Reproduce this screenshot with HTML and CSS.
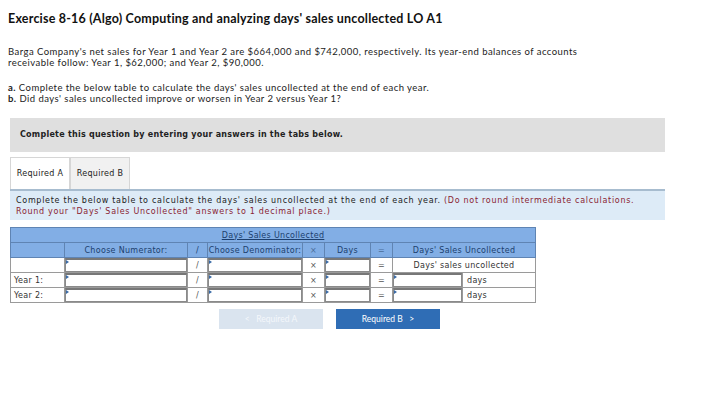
FILE: index.html
```html
<!DOCTYPE html>
<html lang="en">
<head>
    <meta charset="UTF-8">
    <title>Exercise 8-16 (Algo)</title>
    <link rel="stylesheet" href="styles.css">
</head>
<body>
    <h1>Exercise 8-16 (Algo) Computing and analyzing days' sales uncollected LO A1</h1>

    <p class="intro">Barga Company's net sales for Year 1 and Year 2 are $664,000 and $742,000, respectively. Its year-end balances of accounts receivable follow: Year 1, $62,000; and Year 2, $90,000.</p>

    <p class="parts"><b>a.</b> Complete the below table to calculate the days' sales uncollected at the end of each year.<br>
    <b>b.</b> Did days' sales uncollected improve or worsen in Year 2 versus Year 1?</p>

    <div class="notice">Complete this question by entering your answers in the tabs below.</div>

    <div class="tabs">
        <div class="tab active">Required A</div>
        <div class="tab">Required B</div>
    </div>

    <div class="instructions">
        Complete the below table to calculate the days' sales uncollected at the end of each year. <span class="warn">(Do not round intermediate calculations.</span><br>
        <span class="warn">Round your "Days' Sales Uncollected" answers to 1 decimal place.)</span>
    </div>

    <table class="calc">
        <colgroup>
            <col class="c-label">
            <col class="c-num">
            <col class="c-op">
            <col class="c-den">
            <col class="c-op2">
            <col class="c-days">
            <col class="c-op2">
            <col class="c-res">
            <col class="c-unit">
        </colgroup>
        <tr class="head-top">
            <th colspan="9"><u>Days' Sales Uncollected</u></th>
        </tr>
        <tr class="head">
            <th></th>
            <th>Choose Numerator:</th>
            <th>/</th>
            <th>Choose Denominator:</th>
            <th class="op-head">&times;</th>
            <th>Days</th>
            <th class="op-head">=</th>
            <th colspan="2">Days' Sales Uncollected</th>
        </tr>
        <tr>
            <td></td>
            <td class="in"><div class="box"></div></td>
            <td class="op">/</td>
            <td class="in"><div class="box"></div></td>
            <td class="op">&times;</td>
            <td class="in"><div class="box"></div></td>
            <td class="op">=</td>
            <td colspan="2" class="result-label">Days' sales uncollected</td>
        </tr>
        <tr>
            <td class="year">Year 1:</td>
            <td class="in"><div class="box"></div></td>
            <td class="op">/</td>
            <td class="in"><div class="box"></div></td>
            <td class="op">&times;</td>
            <td class="in"><div class="box"></div></td>
            <td class="op">=</td>
            <td class="in"><div class="box"></div></td>
            <td class="unit">days</td>
        </tr>
        <tr>
            <td class="year">Year 2:</td>
            <td class="in"><div class="box"></div></td>
            <td class="op">/</td>
            <td class="in"><div class="box"></div></td>
            <td class="op">&times;</td>
            <td class="in"><div class="box"></div></td>
            <td class="op">=</td>
            <td class="in"><div class="box"></div></td>
            <td class="unit">days</td>
        </tr>
    </table>

    <div class="nav">
        <button class="nav-btn disabled">&lt;&nbsp;&nbsp;&nbsp;Required A</button>
        <button class="nav-btn primary">Required B&nbsp;&nbsp;&nbsp;&gt;</button>
    </div>
</body>
</html>
```

FILE: styles.css
```css
body {
    margin: 0;
    padding: 0 8px;
    font-family: Lato, 'Liberation Sans', sans-serif;
    color: #222;
    background: white;
}

h1 {
    font-size: 12.5px;
    font-weight: 700;
    letter-spacing: 0.2px;
    margin: 11px 0 0;
    line-height: 16px;
    color: #111;
}

.intro {
    font-size: 9.5px;
    letter-spacing: 0.45px;
    line-height: 11px;
    margin: 19px 0 0;
    max-width: 570px;
}

.parts {
    font-size: 9.5px;
    letter-spacing: 0.45px;
    line-height: 11px;
    margin: 14px 0 0;
}

.notice {
    margin: 14px 0 0 2px;
    width: 655px;
    background: #dfdfdf;
    font-family: 'DejaVu Sans', Verdana, sans-serif;
    font-weight: bold;
    font-size: 8px;
    letter-spacing: 0.25px;
    padding: 8px 10px;
    box-sizing: border-box;
    height: 34px;
    line-height: 18px;
}

.tabs {
    display: flex;
    margin: 5px 0 0 2px;
}

.tab {
    font-family: 'DejaVu Sans', Verdana, sans-serif;
    font-size: 8px;
    letter-spacing: 0.3px;
    width: 60px;
    height: 32px;
    line-height: 32px;
    text-align: center;
    box-sizing: border-box;
    border: 1px solid #d6d6d6;
    border-bottom: none;
    background: #f1f1f1;
    color: #222;
}

.tab.active {
    background: white;
}

.instructions {
    margin-left: 2px;
    width: 655px;
    height: 31px;
    box-sizing: border-box;
    background: #ddebf7;
    border-top: 2px solid #a7bccf;
    font-family: 'DejaVu Sans', Verdana, sans-serif;
    font-size: 8px;
    letter-spacing: 0.7px;
    line-height: 11px;
    padding: 4px 6px;
    color: #222;
}

.warn {
    color: #8a2432;
}

.calc {
    margin: 7px 0 0 2px;
    border-collapse: collapse;
    width: 525px;
    font-family: 'DejaVu Sans', Verdana, sans-serif;
    font-size: 8px;
    letter-spacing: 0.3px;
    table-layout: fixed;
}

.c-label { width: 54px; }
.c-num { width: 123px; }
.c-op { width: 20px; }
.c-den { width: 95px; }
.c-op2 { width: 22px; }
.c-days { width: 46px; }
.c-res { width: 70px; }
.c-unit { width: 73px; }

.calc th {
    background: #82aee5;
    color: #1c3f6e;
    font-weight: normal;
    border: 1px solid #5f84b3;
    height: 14px;
    padding: 0;
    white-space: nowrap;
    overflow: hidden;
}

.calc th.op-head {
    color: #4a6d99;
}

.calc td {
    border: 1px solid #9a9a9a;
    height: 14px;
    padding: 0;
    text-align: center;
    color: #333;
    white-space: nowrap;
}

.calc td.year {
    text-align: left;
    padding-left: 3px;
}

.calc td.unit {
    text-align: left;
    padding-left: 4px;
}

.calc td.op {
    color: #555;
}

.box {
    height: 11px;
    border: 1px solid #8a8a8a;
    border-top: 2px solid #777;
    background: white;
    position: relative;
}

.box::before {
    content: '';
    position: absolute;
    left: 0;
    top: 0;
    border-left: 3px solid #3a6aa6;
    border-top: 2px solid transparent;
    border-bottom: 2px solid transparent;
}

.nav {
    display: flex;
    gap: 13px;
    margin: 6px 0 0 211px;
}

.nav-btn {
    width: 104px;
    height: 20px;
    border: none;
    font-family: Lato, 'Liberation Sans', sans-serif;
    font-size: 8.5px;
    color: white;
    padding: 0;
}

.nav-btn.disabled {
    background: #dae4ef;
    color: #f4f7fb;
}

.nav-btn.primary {
    background: #2f6db5;
}
```
